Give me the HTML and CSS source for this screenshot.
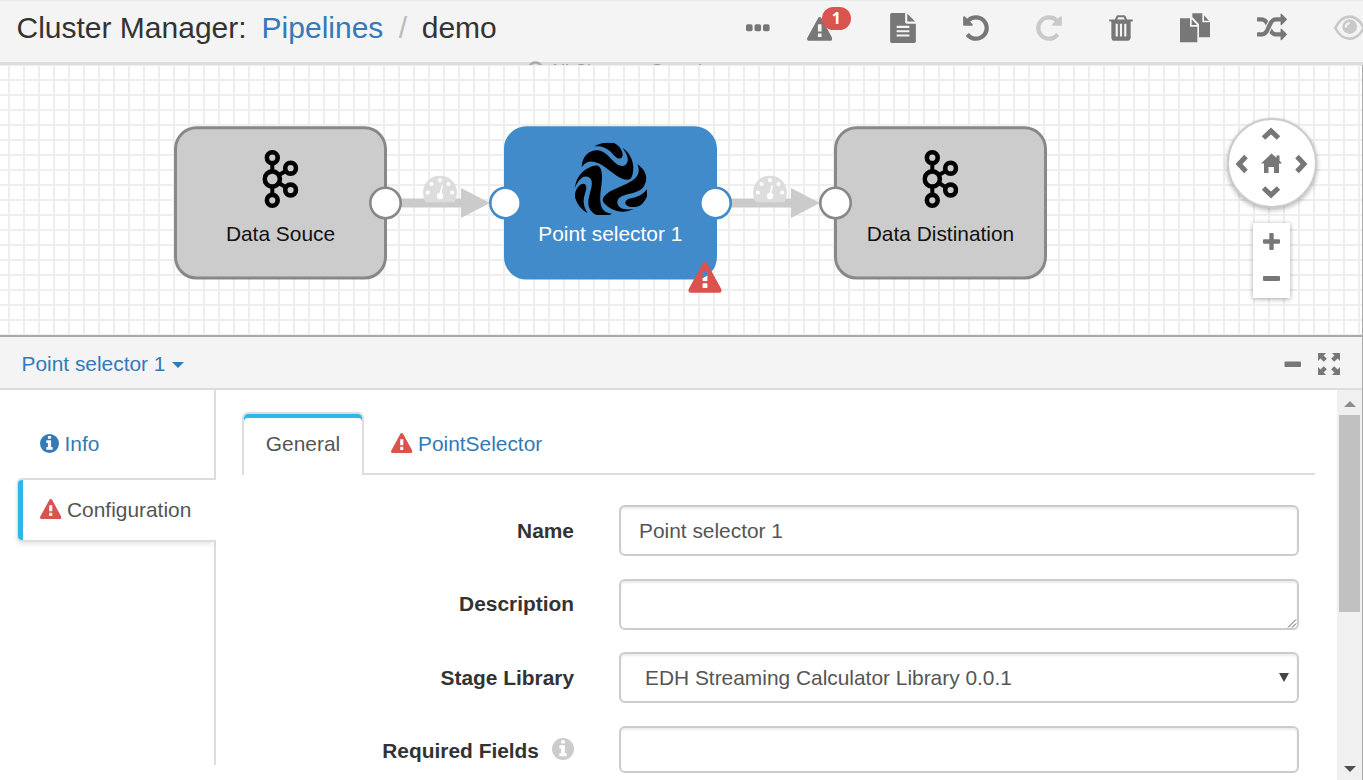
FILE: index.html
```html
<!DOCTYPE html>
<html lang="en">
<head>
<meta charset="utf-8">
<title>Cluster Manager: demo</title>
<link rel="stylesheet" href="styles.css">
</head>
<body>
<svg class="defs" width="0" height="0" aria-hidden="true">
  <symbol id="warning" viewBox="0 0 1792 1792"><path d="M1024 1375v-190q0-14-9.500-23.500t-22.500-9.500h-192q-13 0-22.500 9.500t-9.500 23.500v190q0 14 9.500 23.500t22.500 9.500h192q13 0 22.500-9.500t9.500-23.500zm0-374v-457q0-12-10-19-13-11-24-11h-188q-11 0-24 11-10 7-10 21v457q0 10 10 16.500t24 6.500h188q14 0 23.500-6.500t10.500-16.500zm-16-934l768 1408q35 63-2 126-17 29-46.500 46t-63.500 17h-1536q-34 0-63.500-17t-46.500-46q-37-63-2-126l768-1408q17-31 47-49t65-18 65 18 47 49z"/></symbol>
  <symbol id="info" viewBox="0 0 1536 1536"><path fill-rule="evenodd" d="M768 0a768 768 0 1 1 0 1536a768 768 0 1 1 0-1536zM1024 1248v-160q0-14-9-23t-23-9h-96v-512q0-14-9-23t-23-9h-320q-14 0-23 9t-9 23v160q0 14 9 23t23 9h96v320h-96q-14 0-23 9t-9 23v160q0 14 9 23t23 9h448q14 0 23-9t9-23zM896 352v-160q0-14-9-23t-23-9h-192q-14 0-23 9t-9 23v160q0 14 9 23t23 9h192q14 0 23-9t9-23z"/></symbol>
  <symbol id="kafka" viewBox="0 0 36 58">
    <path d="M10 10V48M10 29L28 18.300M10 29L28 40" stroke="#000" stroke-width="4" fill="none"/>
    <g fill="#ccc" stroke="#000" stroke-width="4.600"><circle cx="10" cy="7.700" r="5.400"/><circle cx="28.300" cy="18.200" r="5.400"/><circle cx="28.300" cy="40" r="5.400"/><circle cx="10" cy="50.300" r="5.400"/><circle cx="10" cy="29" r="7.600"/></g>
  </symbol>
  <symbol id="gauge" viewBox="0 0 34 27">
    <path d="M17 0A17 17 0 0 1 34 17Q34 21.500 32 25.500Q31.500 27 30 27H4Q2.500 27 2 25.500Q0 21.500 0 17A17 17 0 0 1 17 0z" fill="#ddd"/>
    <g fill="#fff"><circle cx="4.800" cy="17" r="2"/><circle cx="8.500" cy="8.500" r="2"/><circle cx="17" cy="4.800" r="2"/><circle cx="25.500" cy="8.500" r="2"/><circle cx="29.200" cy="17" r="2"/><circle cx="17" cy="20.500" r="3.200"/></g>
    <path d="M17 20L19.200 10.500" stroke="#fff" stroke-width="1.600" stroke-linecap="round"/>
  </symbol>
  <g id="swirl">
    <path d="M275 171C277 138 297 119 325 121C342 124 352 135 366 149C378 161 389 171 402 167C420 158 416 137 397 113C417 127 429 147 430 172C430 189 427 200 422 206C413 213 397 208 380 197C362 185 346 170 326 160C304 150 290 152 275 171z"/>
    <path d="M313 109C331 97 354 95 371 99C387 105 396 119 398 132C398 145 391 149 380 143C369 134 360 119 343 113C334 109 325 108 313 109z"/>
  </g>
</svg>

<header class="topbar">
  <h1 class="crumbs"><span>Cluster Manager:</span><a class="crumb-link">Pipelines</a><span class="slash">/</span><span>demo</span></h1>
  <div class="save-state">
    <svg width="17" height="17" viewBox="0 0 17 17"><circle cx="8.500" cy="8.500" r="7" fill="none" stroke="#aaa" stroke-width="2.400"/></svg>
    <span>All Changes Saved</span>
  </div>
  <nav class="actions">
    <a><svg width="24" height="8" viewBox="0 0 24 8"><rect x="0" y=".3" width="6.600" height="7" rx="1.700"/><rect x="8.500" y=".3" width="6.600" height="7" rx="1.700"/><rect x="17" y=".3" width="6.600" height="7" rx="1.700"/></svg></a>
    <a class="alerts"><svg width="25.500" height="25.500"><use href="#warning"/></svg><b class="badge">1</b></a>
    <a><svg width="30" height="30" viewBox="0 0 1792 1792"><path d="M1596 476q14 14 28 36h-472v-472q22 14 36 28zm-476 164h544v1056q0 40-28 68t-68 28h-1344q-40 0-68-28t-28-68v-1600q0-40 28-68t68-28h800v544q0 40 28 68t68 28zm160 736v-64q0-14-9-23t-23-9h-704q-14 0-23 9t-9 23v64q0 14 9 23t23 9h704q14 0 23-9t9-23zm0-256v-64q0-14-9-23t-23-9h-704q-14 0-23 9t-9 23v64q0 14 9 23t23 9h704q14 0 23-9t9-23zm0-256v-64q0-14-9-23t-23-9h-704q-14 0-23 9t-9 23v64q0 14 9 23t23 9h704q14 0 23-9t9-23z"/></svg></a>
    <a><svg width="30" height="30" viewBox="0 0 1792 1792"><path d="M1664 896q0 156-61 298t-164 245-245 164-298 61q-172 0-327-72.500t-264-204.500q-7-10-6.500-22.500t8.500-20.500l137-138q10-9 25-9 16 2 23 12 73 95 179 147t225 52q104 0 198.500-40.500t163.500-109.500 109.500-163.500 40.500-198.500-40.500-198.500-109.500-163.500-163.500-109.500-198.500-40.500q-98 0-188 35.500t-160 101.500l137 138q31 30 14 69-17 40-59 40h-448q-26 0-45-19t-19-45v-448q0-42 40-59 39-17 69 14l130 129q107-101 244.500-156.500t284.500-55.500q156 0 298 61t245 164 164 245 61 298z"/></svg></a>
    <a class="off"><svg width="30" height="30" viewBox="0 0 1792 1792"><path d="M1664 256v448q0 26-19 45t-45 19h-448q-42 0-59-40-17-39 14-69l138-138q-148-137-349-137-104 0-198.500 40.500t-163.500 109.500-109.500 163.500-40.500 198.500 40.500 198.500 109.500 163.500 163.500 109.500 198.500 40.500q119 0 225-52t179-147q7-10 23-12 15 0 25 9l137 138q9 8 9.500 20.500t-7.500 22.500q-109 132-264 204.500t-327 72.500q-156 0-298-61t-245-164-164-245-61-298 61-298 164-245 245-164 298-61q147 0 284.500 55.500t244.500 156.500l130-129q29-31 70-14 39 17 39 59z"/></svg></a>
    <a><svg width="30" height="30" viewBox="0 0 1792 1792"><path d="M704 1376v-704q0-14-9-23t-23-9h-64q-14 0-23 9t-9 23v704q0 14 9 23t23 9h64q14 0 23-9t9-23zm256 0v-704q0-14-9-23t-23-9h-64q-14 0-23 9t-9 23v704q0 14 9 23t23 9h64q14 0 23-9t9-23zm256 0v-704q0-14-9-23t-23-9h-64q-14 0-23 9t-9 23v704q0 14 9 23t23 9h64q14 0 23-9t9-23zm-544-992h448l-48-117q-7-9-17-11h-317q-10 2-17 11zm928 32v64q0 14-9 23t-23 9h-96v948q0 83-47 143.500t-113 60.500h-832q-66 0-113-58.500t-47-141.500v-952h-96q-14 0-23-9t-9-23v-64q0-14 9-23t23-9h309l70-167q15-37 54-63t79-26h320q40 0 79 26t54 63l70 167h309q14 0 23 9t9 23z"/></svg></a>
    <a><svg width="30" height="30" viewBox="720 41 90 90"><path d="M720 57H750V82H772V129H720zM755 60L771 77H755zM757 42H787V69H810V114H777V75L757 53zM792 48L807 64H792z"/></svg></a>
    <a><svg width="30" height="30" viewBox="0 0 1792 1792"><path d="M666 481q-60 92-137 273-22-45-37-72.500t-40.500-63.500-51-56.500-63-35-81.500-14.500h-224q-14 0-23-9t-9-23v-192q0-14 9-23t23-9h224q250 0 410 225zm1126 799q0 14-9 23l-320 320q-9 9-23 9-13 0-22.500-9.500t-9.500-22.500v-192q-32 0-85 .5t-81 1-73-1-71-5-64-10.500-63-18.500-58-28.500-59-40-55-53.500-56-69.500q59-93 136-273 22 45 37 72.500t40.500 63.500 51 56.500 63 35 81.500 14.500h256v-192q0-14 9-23t23-9q12 0 24 10l319 319q9 9 9 23zm0-896q0 14-9 23l-320 320q-9 9-23 9-13 0-22.500-9.500t-9.500-22.500v-192h-256q-48 0-87 15t-69 45-51 61.500-45 77.500q-32 62-78 171-29 66-49.500 111t-54 105-64 100-74 83-90 68.500-106.500 42-128 16.500h-224q-14 0-23-9t-9-23v-192q0-14 9-23t23-9h224q48 0 87-15t69-45 51-61.500 45-77.500q32-62 78-171 29-66 49.500-111t54-105 64-100 74-83 90-68.500 106.500-42 128-16.500h256v-192q0-14 9-23t23-9q12 0 24 10l319 319q9 9 9 23z"/></svg></a>
    <a class="off"><svg width="31" height="26" viewBox="1182 47 93 78"><path d="M1186 86Q1202 52 1228.500 52T1271 86Q1255 118 1228.500 118T1186 86z" fill="none" stroke="#c9c9c9" stroke-width="8"/><circle cx="1229" cy="82" r="22"/><path d="M1218 82Q1218 73 1227 72" fill="none" stroke="#f4f4f4" stroke-width="6" stroke-linecap="round"/></svg></a>
  </nav>
</header>

<main class="canvas">
  <svg class="graph" width="1362" height="270" viewBox="0 65 1362 270">
    <g class="edges" fill="#cbcbcb">
      <path d="M400 198.500H461V188L490 203L461 218V207.500H400z"/>
      <path d="M730 198.500H791V188L820 203L791 218V207.500H730z"/>
    </g>
    <use href="#gauge" x="423" y="175.500" width="34" height="27"/>
    <use href="#gauge" x="753" y="175.500" width="34" height="27"/>

    <g class="node">
      <rect x="175.500" y="127.800" width="210" height="150.200" rx="21"/>
      <use href="#kafka" x="262.300" y="150" width="36" height="58"/>
      <text x="280.500" y="241">Data Souce</text>
      <circle cx="385.500" cy="203" r="15.200"/>
    </g>
    <g class="node selected">
      <rect x="505.500" y="127.800" width="210" height="150.200" rx="21"/>
      <svg x="574" y="142.700" width="73" height="72.300" viewBox="252 98 219 217">
        <use href="#swirl"/><use href="#swirl" transform="rotate(120 361 215)"/><use href="#swirl" transform="rotate(240 361 215)"/>
      </svg>
      <text x="610.300" y="241">Point selector 1</text>
      <circle cx="505.500" cy="203" r="15.200"/>
      <circle cx="715.500" cy="203" r="15.200"/>
      <use class="danger" href="#warning" x="688.300" y="261.800" width="33.400" height="33.400"/>
    </g>
    <g class="node">
      <rect x="835.500" y="127.800" width="210" height="150.200" rx="21"/>
      <use href="#kafka" x="922.300" y="150" width="36" height="58"/>
      <text x="940.500" y="241">Data Distination</text>
      <circle cx="835.500" cy="203" r="15.200"/>
    </g>
  </svg>
  <div class="pan">
    <svg width="85" height="85" viewBox="0 0 85 85">
      <g fill="none" stroke="#777" stroke-width="5"><path d="M34.500 18L42 11L49.500 18"/><path d="M34.500 68L42 75L49.500 68"/><path d="M17 36.500L10 44L17 51.500"/><path d="M68 36.500L75 44L68 51.500"/></g>
      <path fill="#777" d="M42.500 33.500L47.500 37.700V35.500H50.500V40.500L53 43.500H50V53H45V47H39.500V53H35V43.500H32z"/>
    </svg>
  </div>
  <div class="zoom">
    <svg width="17" height="17" viewBox="0 0 17 17"><path d="M6.300 1Q6.300 0 7.300 0H9.700Q10.700 0 10.700 1V6.300H16Q17 6.300 17 7.300V9.700Q17 10.700 16 10.700H10.700V16Q10.700 17 9.700 17H7.300Q6.300 17 6.300 16V10.700H1Q0 10.700 0 9.700V7.300Q0 6.300 1 6.300H6.300z"/></svg>
    <svg width="17" height="5" viewBox="0 0 17 5"><rect width="17" height="5" rx="1"/></svg>
  </div>
</main>

<section class="detail">
  <div class="detail-head">
    <a class="stage-menu">Point selector 1<i class="caret"></i></a>
    <div class="window-tools">
      <svg width="17" height="6" viewBox="0 0 17 6"><rect x=".5" y=".5" width="16.500" height="5.400" rx="1"/></svg>
      <svg width="22" height="22" viewBox="0 0 22 22"><g id="corner"><path d="M0 0H8L5.600 2.400L8.800 5.800L5.800 8.800L2.400 5.600L0 8z"/></g><use href="#corner" transform="rotate(90 11 11)"/><use href="#corner" transform="rotate(180 11 11)"/><use href="#corner" transform="rotate(270 11 11)"/></svg>
    </div>
  </div>
  <div class="detail-body">
    <aside class="side">
      <a class="side-item"><svg width="19" height="19"><use href="#info"/></svg>Info</a>
      <a class="side-item active"><svg class="danger" width="21.500" height="21.500"><use href="#warning"/></svg>Configuration</a>
      <div class="side-rest"></div>
    </aside>
    <div class="config">
      <div class="tabs">
        <a class="tab active">General</a>
        <a class="tab"><svg class="danger" width="21.500" height="21.500"><use href="#warning"/></svg>PointSelector</a>
      </div>
      <form class="form">
        <label>Name</label>
        <div class="field">Point selector 1</div>
        <label>Description</label>
        <div class="field area"><svg width="10" height="9" viewBox="0 0 10 9"><path d="M1 8.500L9 .5M5 8.500L9 4.500" stroke="#555" stroke-width="1" fill="none"/></svg></div>
        <label>Stage Library</label>
        <div class="field select"><span>EDH Streaming Calculator Library 0.0.1</span><i class="drop"></i></div>
        <label class="low">Required Fields<svg width="22" height="22"><use href="#info"/></svg></label>
        <div class="field last"></div>
      </form>
    </div>
    <div class="scrollbar"><i class="up"></i><div class="thumb"></div><i class="down"></i></div>
  </div>
</section>
</body>
</html>
```

FILE: styles.css
```css
* { box-sizing: border-box; }
body {
  margin: 0;
  width: 1363px;
  height: 780px;
  overflow: hidden;
  display: flex;
  flex-direction: column;
  background: #fff;
  color: #333;
  font: 20.9px/30px "Liberation Sans", Arial, sans-serif;
}
svg { display: block; flex: none; fill: #777; }
.defs { position: absolute; }

.topbar {
  position: relative;
  display: flex;
  flex: none;
  height: 65px;
  overflow: hidden;
  background: #f4f4f4;
  box-shadow: inset 0 1px #ebebeb, inset 0 -3px #ddd;
}
.crumbs {
  display: flex;
  flex: none;
  width: 721px;
  margin: 0;
  padding: 11px 0 0 16.5px;
  font-size: 30px;
  line-height: 34px;
  font-weight: normal;
}
.crumb-link { margin-left: 15px; color: #337ab7; }
.slash { margin: 0 14.5px 0 15.5px; color: #bbb; }
.save-state {
  position: absolute;
  left: 527px;
  top: 60px;
  display: flex;
  align-items: flex-start;
  gap: 9px;
  font-size: 18px;
  line-height: 22px;
  color: #999;
  white-space: nowrap;
}
.save-state svg { margin-top: 1px; }
.save-state span { margin-left: -4px; }
.actions {
  display: grid;
  flex: none;
  grid-template-columns: 73px 72.5px 73px 73px 73px 71px 77px 77px 77px;
  height: 56px;
}
.actions a { display: flex; align-items: center; justify-content: center; }
.actions .off svg { fill: #c9c9c9; }
.actions .alerts { position: relative; justify-content: flex-start; padding: 4px 0 0 12.5px; }
.badge {
  position: absolute;
  left: 27.5px;
  top: 7px;
  width: 29.5px;
  height: 23px;
  border-radius: 11.5px;
  background: #d9534f;
  color: #fff;
  font: bold 16px/23px "Open Sans", sans-serif;
  text-align: center;
}

.canvas {
  position: relative;
  flex: none;
  height: 270px;
  border-right: 1px solid #aaa;
  background-color: #fff;
  background-image:
    linear-gradient(90deg, #eee 2px, transparent 2px),
    linear-gradient(#eee 2px, transparent 2px);
  background-size: 15px 15px;
  background-position: 8px 14px;
}
.node rect { fill: #ccc; stroke: #888; stroke-width: 3px; }
.node circle { fill: #fff; stroke: #888; stroke-width: 2.6px; }
.node text { fill: #111; text-anchor: middle; }
.node.selected rect { fill: #428bca; stroke: #428bca; }
.node.selected circle { stroke: #428bca; }
.node.selected text { fill: #fff; }
.node.selected svg { fill: #000; }
.danger, .node .danger { fill: #d9534f; }
.pan {
  position: absolute;
  left: 1227px;
  top: 53px;
  width: 90px;
  height: 90px;
  border: 2px solid #ccc;
  border-radius: 50%;
  background: #fff;
  box-shadow: 0 2px 5px rgba(0, 0, 0, .3);
}
.zoom {
  position: absolute;
  left: 1253px;
  top: 158px;
  width: 37px;
  height: 75px;
  padding-top: 9.5px;
  display: flex;
  flex-direction: column;
  align-items: center;
  gap: 26px;
  background: #fff;
  box-shadow: 0 1px 5px rgba(0, 0, 0, .35);
}

.detail {
  flex: 1;
  display: flex;
  flex-direction: column;
  border-top: 2px solid #aaa;
  border-right: 1px solid #aaa;
}
.detail-head {
  flex: none;
  display: flex;
  justify-content: space-between;
  align-items: center;
  height: 53px;
  padding: 0 22px 0 21.5px;
  background: #f4f4f4;
  border-bottom: 2px solid #ddd;
}
.stage-menu { display: flex; align-items: center; gap: 6px; padding-top: 2px; color: #337ab7; }
.caret { margin-top: 3px; border: 6px solid transparent; border-top-color: #337ab7; border-bottom: 0; }
.window-tools { display: flex; align-items: center; gap: 17px; padding-top: 2px; }
.detail-body { flex: 1; display: flex; min-height: 0; }

.side { flex: none; display: flex; flex-direction: column; width: 216px; }
.side-item {
  display: flex;
  align-items: center;
  gap: 5.5px;
  height: 88px;
  padding: 19px 0 0 40px;
  border-right: 2px solid #ddd;
  color: #337ab7;
}
.side-item svg { fill: #337ab7; }
.side-item.active {
  height: 64px;
  margin-left: 17px;
  padding: 0 0 1px 1px;
  border: 2px solid #ddd;
  border-width: 2px 0 2px 1px;
  border-radius: 5px 0 0 5px;
  background: #fff;
  box-shadow: -1px 3px 5px -1px rgba(0, 0, 0, .1);
  clip-path: inset(-8px 0 -8px -8px);
  color: #555;
}
.side-item.active::before {
  content: "";
  width: 5px;
  height: 60px;
  margin: 1px 11.5px 0 -1px;
  border-radius: 4px 0 0 4px;
  background: #2cb8eb;
}
.side-item svg.danger { margin-top: 1px; fill: #d9534f; }
.side-rest { height: 223px; border-right: 2px solid #ddd; }

.config { flex: 1; padding: 22px 22px 0 26px; }
.tabs { display: flex; height: 63px; border-bottom: 2px solid #ddd; }
.tab { display: flex; gap: 5.5px; align-items: center; padding: 2px 0 0 27px; color: #337ab7; }
.tab.active {
  width: 122px;
  height: 63px;
  padding: 0 0 2px;
  justify-content: center;
  border: 2px solid #ddd;
  border-bottom: 0;
  border-radius: 6px 6px 0 0;
  background: #fff;
  box-shadow: inset 0 4px #2cb8eb;
  color: #555;
}
.form {
  display: grid;
  grid-template-columns: 332px 680px;
  column-gap: 45px;
  grid-template-rows: 51px 51px 51px 47px;
  row-gap: 22.5px;
  padding-top: 30px;
}
.form label {
  display: flex;
  justify-content: flex-end;
  align-items: center;
  gap: 13px;
  font-weight: bold;
}
.form label.low { padding-top: 4px; }
.form label svg { fill: #ccc; margin-top: -5px; }
.field {
  display: flex;
  align-items: center;
  padding: 0 18px;
  border: 2px solid #ccc;
  border-radius: 6px;
  box-shadow: inset 0 2px 2px rgba(0, 0, 0, .075);
  color: #555;
}
.field.area { align-items: flex-end; justify-content: flex-end; padding: 0; }
.field.select { justify-content: space-between; padding: 0 8px 0 24px; }
.drop { border: 5px solid transparent; border-top: 9px solid #444; border-bottom: 0; }

.scrollbar {
  flex: none;
  width: 25px;
  display: flex;
  flex-direction: column;
  align-items: center;
  padding: 11px 0 8px;
  background: #f0f0f0;
}
.scrollbar i { border: 6px solid transparent; }
.scrollbar .up { border-top: 0; border-bottom: 6px solid #8c8c8c; }
.scrollbar .down { margin-top: auto; border-bottom: 0; border-top: 6px solid #505050; }
.thumb { width: 21px; height: 197px; margin-top: 8px; background: #c1c1c1; }
```
